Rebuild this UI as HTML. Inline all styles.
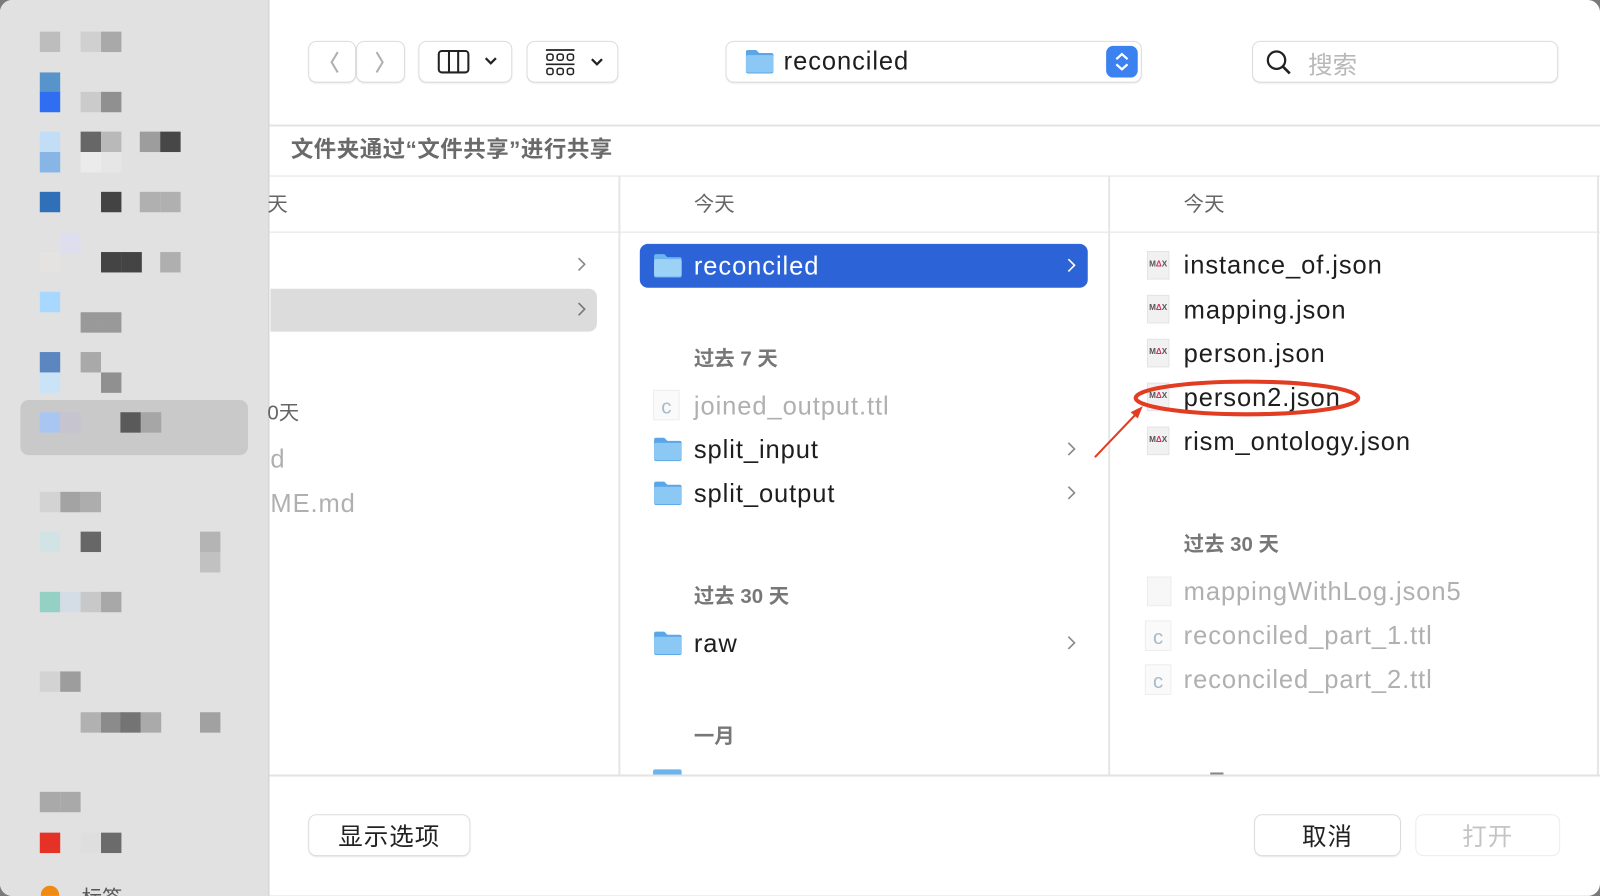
<!DOCTYPE html>
<html><head><meta charset="utf-8">
<style>
*{margin:0;padding:0;box-sizing:border-box}
html,body{width:1600px;height:896px;overflow:hidden;background:#7a7a7a}
#w{position:absolute;left:0;top:0;width:1568px;height:878px;transform:scale(1.020408);transform-origin:0 0;background:#fff;border-radius:12px;overflow:hidden;font-family:"Liberation Sans","Noto Sans CJK SC",sans-serif}
.a{position:absolute}
.px{position:absolute;width:20px;height:20px}
.btn{position:absolute;background:#fff;border-radius:7px;box-shadow:0 0 0 1px #dcdcdc,0 1px 2px rgba(0,0,0,.15)}
.t{position:absolute;font-size:25px;color:#1e1e1e;white-space:nowrap;line-height:30px;letter-spacing:0.9px}
.g{color:#b0b0b0}
.h{position:absolute;font-size:20px;color:#777;font-weight:bold;white-space:nowrap;line-height:26px}
.fold{position:absolute;width:29px;height:24px}
.chev{position:absolute;width:9px;height:14px}
.fi{position:absolute;width:22px;height:28px;background:#f1f1f1;border:1px solid #e4e4e4;font-size:8px;color:#555;text-align:center;line-height:24px;font-weight:bold}
.fi b{color:#d03060}
</style></head><body>
<div id="w">
<div class="a" style="left:0;top:0;width:264px;height:878px;background:#e1e1e1;border-right:1px solid #cfcfcf"></div>
<div class="a" style="left:20px;top:392px;width:223px;height:54px;background:#c9c9c9;border-radius:8px"></div>
<div id="sb"></div>
<div class="btn" style="left:303px;top:41px;width:45px;height:39px"></div>
<div class="btn" style="left:350px;top:41px;width:46px;height:39px"></div>
<svg class="a" style="left:316px;top:47px" width="70" height="28"><path d="M15 4 L9 14 L15 24" stroke="#b0b0b0" stroke-width="2" fill="none"/><path d="M53 4 L59 14 L53 24" stroke="#b0b0b0" stroke-width="2" fill="none"/></svg>
<div class="btn" style="left:411px;top:41px;width:90px;height:39px"></div>
<svg class="a" style="left:428px;top:48px" width="64" height="26"><rect x="2" y="2" width="29" height="21" rx="3" stroke="#222" stroke-width="2" fill="none"/><path d="M12 2v21M21 2v21" stroke="#222" stroke-width="2"/><path d="M48 9l5 5 5-5" stroke="#222" stroke-width="2.2" fill="none"/></svg>
<div class="btn" style="left:517px;top:41px;width:88px;height:39px"></div>
<svg class="a" style="left:533px;top:46px" width="64" height="30"><path d="M2 3h28M2 17h28" stroke="#222" stroke-width="1.6"/><g fill="none" stroke="#222" stroke-width="1.5"><rect x="3" y="7" width="6" height="6" rx="2"/><rect x="13" y="7" width="6" height="6" rx="2"/><rect x="23" y="7" width="6" height="6" rx="2"/><rect x="3" y="21" width="6" height="6" rx="2"/><rect x="13" y="21" width="6" height="6" rx="2"/><rect x="23" y="21" width="6" height="6" rx="2"/></g><path d="M47 12l5 5 5-5" stroke="#222" stroke-width="2.2" fill="none"/></svg>
<div class="btn" style="left:712px;top:41px;width:406px;height:39px"></div>
<svg class="fold" style="left:730px;top:48px" viewBox="0 0 29 24"><path d="M1 3q0-2 2-2h8l3 3h12q2 0 2 2v16q0 2-2 2H3q-2 0-2-2z" fill="#5aa6e6"/><rect x="1" y="6" width="27" height="17" rx="2" fill="#8cc8f4"/></svg>
<div class="t" style="left:768px;top:45px;font-size:25px">reconciled</div>
<div class="a" style="left:1084px;top:45px;width:31px;height:31px;background:#3b82f0;border-radius:7px"></div>
<svg class="a" style="left:1084px;top:45px" width="31" height="31"><path d="M10 13l5.5-5 5.5 5M10 18l5.5 5 5.5-5" stroke="#fff" stroke-width="2.2" fill="none"/></svg>
<div class="btn" style="left:1228px;top:41px;width:298px;height:39px"></div>
<svg class="a" style="left:1240px;top:48px" width="28" height="28"><circle cx="11" cy="11" r="8.5" stroke="#222" stroke-width="2.2" fill="none"/><path d="M17 17l7 7" stroke="#222" stroke-width="2.6"/></svg>
<div class="a" style="left:1282px;top:44px;font-size:24px;color:#b8b8b8">搜索</div>
<div class="a" style="left:264px;top:122px;width:1304px;height:2px;background:#e3e3e3"></div>
<div class="h" style="left:285px;top:134px;color:#6a6a6a;font-size:22px;letter-spacing:0.5px">文件夹通过“文件共享”进行共享</div>
<div class="a" style="left:264px;top:172px;width:1304px;height:1px;background:#e3e3e3"></div>
<div class="a" style="left:264px;top:227px;width:1304px;height:1px;background:#e3e3e3"></div>
<div class="a" style="left:606px;top:172px;width:2px;height:588px;background:#e6e6e6"></div>
<div class="a" style="left:1086px;top:172px;width:2px;height:588px;background:#e6e6e6"></div>
<div class="a" style="left:1565px;top:172px;width:2px;height:588px;background:#e6e6e6"></div>
<div class="a" style="left:264px;top:759px;width:1304px;height:2px;background:#e3e3e3"></div>
<div class="h" style="left:262px;top:188px;font-weight:normal;color:#666">天</div>
<div class="a" style="left:265px;top:283px;width:320px;height:42px;background:#dcdcdc;border-radius:0 8px 8px 0"></div>
<svg class="chev" style="left:565px;top:252px"><path d="M2 1l6 6-6 6" stroke="#888" stroke-width="1.6" fill="none"/></svg>
<svg class="chev" style="left:565px;top:296px"><path d="M2 1l6 6-6 6" stroke="#777" stroke-width="1.6" fill="none"/></svg>
<div class="h" style="left:262px;top:392px;font-weight:normal;color:#666">0天</div>
<div class="t g" style="left:265px;top:435px">d</div>
<div class="t g" style="left:265px;top:479px">ME.md</div>
<div class="h" style="left:680px;top:188px;font-weight:normal;color:#666">今天</div>
<div class="a" style="left:627px;top:239px;width:439px;height:43px;background:#2c64d8;border-radius:8px"></div>
<svg class="fold" style="left:640px;top:248px" viewBox="0 0 29 24"><path d="M1 3q0-2 2-2h8l3 3h12q2 0 2 2v16q0 2-2 2H3q-2 0-2-2z" fill="#6bb4ee"/><rect x="1" y="6" width="27" height="17" rx="2" fill="#9dd2f7"/></svg>
<div class="t" style="left:680px;top:246px;color:#fff">reconciled</div>
<svg class="chev" style="left:1045px;top:253px"><path d="M2 1l6 6-6 6" stroke="#fff" stroke-width="1.6" fill="none"/></svg>
<div class="h" style="left:680px;top:339px">过去 7 天</div>
<div class="a" style="left:640px;top:382px;width:26px;height:30px;background:#fafafa;border:1px solid #eee;color:#a6bccc;font-size:20px;text-align:center;line-height:32px">c</div>
<div class="t g" style="left:680px;top:383px">joined_output.ttl</div>
<svg class="fold" style="left:640px;top:428px" viewBox="0 0 29 24"><path d="M1 3q0-2 2-2h8l3 3h12q2 0 2 2v16q0 2-2 2H3q-2 0-2-2z" fill="#5aa6e6"/><rect x="1" y="6" width="27" height="17" rx="2" fill="#8cc8f4"/></svg>
<div class="t" style="left:680px;top:426px">split_input</div>
<svg class="chev" style="left:1045px;top:433px"><path d="M2 1l6 6-6 6" stroke="#888" stroke-width="1.6" fill="none"/></svg>
<svg class="fold" style="left:640px;top:471px" viewBox="0 0 29 24"><path d="M1 3q0-2 2-2h8l3 3h12q2 0 2 2v16q0 2-2 2H3q-2 0-2-2z" fill="#5aa6e6"/><rect x="1" y="6" width="27" height="17" rx="2" fill="#8cc8f4"/></svg>
<div class="t" style="left:680px;top:469px">split_output</div>
<svg class="chev" style="left:1045px;top:476px"><path d="M2 1l6 6-6 6" stroke="#888" stroke-width="1.6" fill="none"/></svg>
<div class="h" style="left:680px;top:572px">过去 30 天</div>
<svg class="fold" style="left:640px;top:618px" viewBox="0 0 29 24"><path d="M1 3q0-2 2-2h8l3 3h12q2 0 2 2v16q0 2-2 2H3q-2 0-2-2z" fill="#5aa6e6"/><rect x="1" y="6" width="27" height="17" rx="2" fill="#8cc8f4"/></svg>
<div class="t" style="left:680px;top:616px">raw</div>
<svg class="chev" style="left:1045px;top:623px"><path d="M2 1l6 6-6 6" stroke="#888" stroke-width="1.6" fill="none"/></svg>
<div class="h" style="left:680px;top:709px">一月</div>
<div class="a" style="left:640px;top:754px;width:28px;height:5px;background:#6bb4ee;border-radius:2px 2px 0 0"></div>
<div class="h" style="left:1160px;top:188px;font-weight:normal;color:#666">今天</div>
<div class="fi" style="left:1124px;top:246px">M<b>Δ</b>X</div><div class="t" style="left:1160px;top:245px">instance_of.json</div>
<div class="fi" style="left:1124px;top:289px">M<b>Δ</b>X</div><div class="t" style="left:1160px;top:289px">mapping.json</div>
<div class="fi" style="left:1124px;top:332px">M<b>Δ</b>X</div><div class="t" style="left:1160px;top:332px">person.json</div>
<div class="fi" style="left:1124px;top:375px">M<b>Δ</b>X</div><div class="t" style="left:1160px;top:375px">person2.json</div>
<div class="fi" style="left:1124px;top:418px">M<b>Δ</b>X</div><div class="t" style="left:1160px;top:418px">rism_ontology.json</div>
<div class="h" style="left:1160px;top:521px">过去 30 天</div>
<div class="a" style="left:1124px;top:565px;width:24px;height:29px;background:#f7f7f7;border:1px solid #ececec"></div>
<div class="t g" style="left:1160px;top:565px">mappingWithLog.json5</div>
<div class="a" style="left:1122px;top:608px;width:26px;height:30px;background:#fafafa;border:1px solid #eee;color:#a6bccc;font-size:20px;text-align:center;line-height:32px">c</div>
<div class="t g" style="left:1160px;top:608px">reconciled_part_1.ttl</div>
<div class="a" style="left:1122px;top:651px;width:26px;height:30px;background:#fafafa;border:1px solid #eee;color:#a6bccc;font-size:20px;text-align:center;line-height:32px">c</div>
<div class="t g" style="left:1160px;top:651px">reconciled_part_2.ttl</div>
<div class="a" style="left:1186px;top:757px;width:13px;height:2px;background:#888"></div>
<svg class="a" style="left:1060px;top:360px" width="290" height="100"><ellipse cx="162" cy="30" rx="109" ry="16" stroke="#e23c22" stroke-width="4" fill="none"/><path d="M13 88L55 44" stroke="#e23c22" stroke-width="2"/><path d="M60 38L48 44L55 50Z" fill="#e23c22"/></svg>
<div class="btn" style="left:303px;top:799px;width:157px;height:39px"></div>
<div class="a" style="left:303px;top:800px;width:157px;text-align:center;font-size:24px;color:#222;letter-spacing:1px">显示选项</div>
<div class="btn" style="left:1230px;top:799px;width:142px;height:39px"></div>
<div class="a" style="left:1230px;top:800px;width:142px;text-align:center;font-size:24px;color:#222;letter-spacing:1px">取消</div>
<div class="btn" style="left:1388px;top:799px;width:140px;height:39px;box-shadow:0 0 0 1px #ececec"></div>
<div class="a" style="left:1388px;top:800px;width:140px;text-align:center;font-size:24px;color:#c4c4c4;letter-spacing:1px">打开</div>
<div class="a" style="left:40px;top:868px;width:18px;height:18px;border-radius:50%;background:#f08a12"></div>
<div class="a" style="left:80px;top:864px;font-size:20px;color:#555">标签</div>
</div>
<script>
var c=[[39,31,"#bdbdbd"],[79,31,"#d0d0d0"],[99,31,"#a9a9a9"],[39,71,"#5894cc"],[39,90,"#2f6ef0"],[79,90,"#cbcbcb"],[99,90,"#909090"],[39,129,"#c2def6"],[79,129,"#676767"],[99,129,"#b9b9b9"],[137,129,"#9d9d9d"],[157,129,"#474747"],[39,149,"#86b5e6"],[79,149,"#ebebeb"],[99,149,"#e6e6e6"],[39,188,"#3070b8"],[99,188,"#434343"],[137,188,"#b0b0b0"],[157,188,"#b0b0b0"],[59,228,"#dddfee"],[39,247,"#e5e2e2"],[99,247,"#444"],[119,247,"#444"],[157,247,"#afafaf"],[39,286,"#a8d8ff"],[79,306,"#999"],[99,306,"#999"],[39,345,"#5c86c0"],[79,345,"#a9a9a9"],[39,365,"#cbe3f6"],[99,365,"#909090"],[39,404,"#a9c6f3"],[59,404,"#c6c4cf"],[118,404,"#5a5a5a"],[138,404,"#a6a6a6"],[59,482,"#a3a3a3"],[79,482,"#adadad"],[39,482,"#d3d3d3"],[39,521,"#d2e3e6"],[79,521,"#676767"],[196,521,"#b4b4b4"],[196,541,"#c1c1c1"],[39,580,"#95d0c5"],[59,580,"#d4dde5"],[79,580,"#c8c8c8"],[99,580,"#a8a8a8"],[39,658,"#d3d3d3"],[59,658,"#9d9d9d"],[79,698,"#b1b1b1"],[99,698,"#8b8b8b"],[118,698,"#747474"],[138,698,"#aaa"],[196,698,"#a1a1a1"],[39,776,"#a9a9a9"],[59,776,"#a9a9a9"],[39,816,"#e53126"],[79,816,"#dedede"],[99,816,"#6b6b6b"]];
var h="";c.forEach(function(p){h+='<div class="px" style="left:'+p[0]+'px;top:'+p[1]+'px;background:'+p[2]+'"></div>'});document.getElementById("sb").innerHTML=h;
</script>
</body></html>
